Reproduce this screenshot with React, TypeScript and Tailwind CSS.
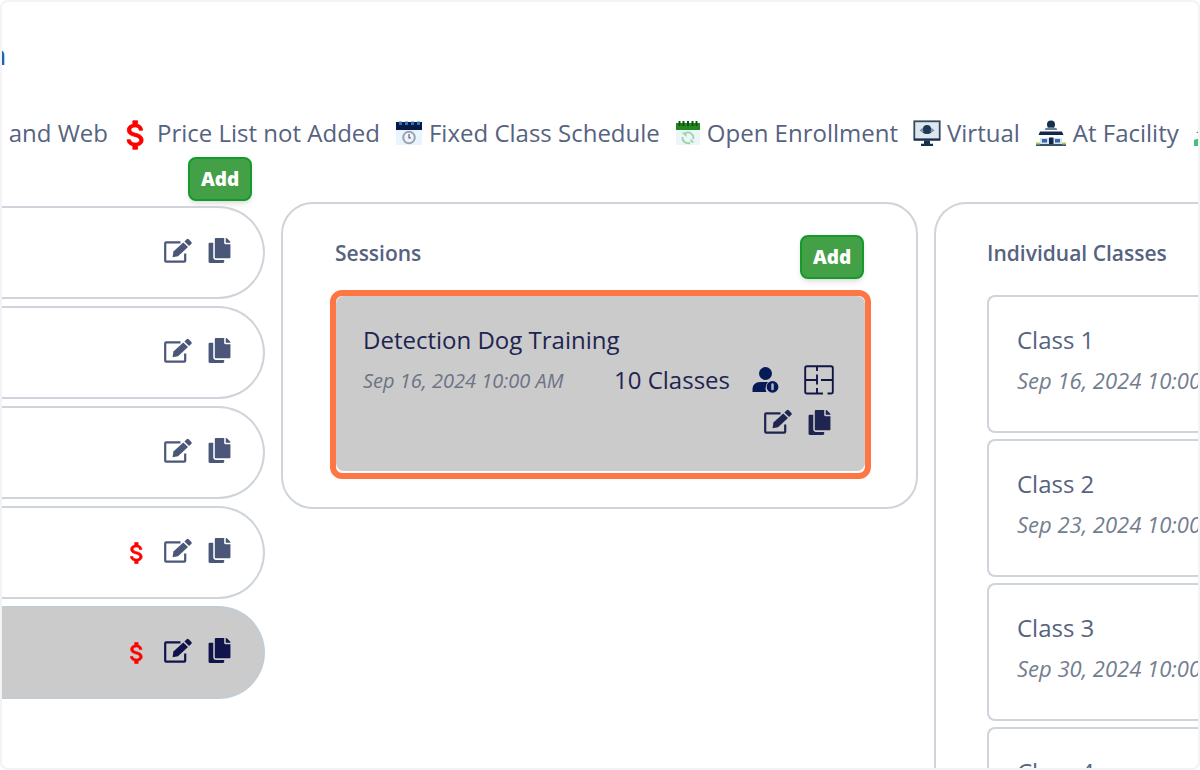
import type { ReactNode } from "react";
import { FaCopy } from "react-icons/fa";

function EditIcon() {
  return (
    <svg width="30" height="26" viewBox="0 0 30 26" fill="none" aria-hidden="true">
      <path
        d="M17.500 4.300H3.200Q2.200 4.300 2.200 5.300V22.700Q2.200 23.700 3.200 23.700H21.200Q22.200 23.700 22.200 22.700V15.500"
        stroke="currentColor"
        strokeWidth="2.200"
      />
      <path d="M9.600 19.200L10.400 13.600L20.300 4.500L25 9.100L15 18.300Z" fill="currentColor" />
      <path d="M21.400 3.500L23.700 1.200Q24.700 .3 25.700 1.200L28.400 3.900Q29.300 4.800 28.400 5.800L26.100 8.100Z" fill="currentColor" />
    </svg>
  );
}

function FixedScheduleIcon() {
  return (
    <svg width="28" height="26" viewBox="0 0 28 26" aria-hidden="true">
      <rect x="1" y="8" width="26" height="17" fill="#e9f5fe" />
      <rect x="1" y="2" width="26" height="8" fill="#061a45" />
      <path d="M4 1.500h3v3.500H4zM10 1.500h3v3.500h-3zM16 1.500h3v3.500h-3zM22 1.500h3v3.500h-3z" fill="#2f73c0" />
      <circle cx="14" cy="17.500" r="5.800" fill="#eef4f8" stroke="#9aa4b0" strokeWidth="2" />
      <path d="M14 14V17.800H16" stroke="#66717f" strokeWidth="1.300" fill="none" />
    </svg>
  );
}

function OpenEnrollmentIcon() {
  return (
    <svg width="26" height="26" viewBox="0 0 26 26" aria-hidden="true">
      <rect x="1" y="8" width="24" height="17" fill="#e9f7fb" />
      <rect x="1" y="3" width="24" height="7" fill="#23891c" />
      <path d="M4.500 1v5M8.500 1v5M13 1v5M17.500 1v5M21.500 1v5" stroke="#174c1b" strokeWidth="2" />
      <path d="M7.500 17A5.500 5.500 0 0 0 15 22.800M18.300 19A5.500 5.500 0 0 0 10.500 13" stroke="#9fd3a2" strokeWidth="1.800" fill="none" />
      <path d="M6.500 12.500h5v4.500zM19.500 22.500h-4v-4z" fill="#9fd3a2" />
    </svg>
  );
}

function VirtualIcon() {
  return (
    <svg width="28" height="26" viewBox="0 0 28 26" aria-hidden="true">
      <rect x="1.300" y="1.300" width="25.400" height="18.400" fill="#dde7ef" stroke="#35495f" strokeWidth="1.800" />
      <path d="M1 18.600h26v2H1z" fill="#18304f" />
      <path d="M11 20.500h6v3.300h3V26H8v-2.200h3z" fill="#18304f" />
      <path d="M6.500 10.500Q14 3 21.500 10.500Q14 17 6.500 10.500Z" fill="#7e92a6" />
      <circle cx="14" cy="9" r="4" fill="#1e3956" />
      <path d="M9.500 12.500Q14 8.500 18.500 12.500Q14 15.500 9.500 12.500Z" fill="#1e3956" />
    </svg>
  );
}

function FacilityIcon() {
  return (
    <svg width="32" height="28" viewBox="0 0 32 28" aria-hidden="true">
      <circle cx="16" cy="5.500" r="4" fill="#18304f" />
      <path d="M10 9.500Q16 6.500 22 9.500V11H10Z" fill="#6c8298" />
      <path d="M5 12.500h22l1.500 3.500h-25z" fill="#10294a" />
      <rect x="5" y="19" width="22" height="6" fill="#d5e2ee" />
      <path d="M7 20h5v3.500H7zM20 20h5v3.500h-5z" fill="#2e69b2" />
      <path d="M14 18.500h4.500V25H14z" fill="#10294a" />
      <path d="M1 25h30v2H1z" fill="#3a5266" />
      <path d="M1 23.500h4v2H1zM27 23.500h4v2h-4z" fill="#9bd05b" />
    </svg>
  );
}

function OffSiteIcon() {
  return (
    <svg width="28" height="28" viewBox="0 0 28 28" aria-hidden="true">
      <path d="M2 14L10 7L18 14Z" fill="#74828f" />
      <path d="M0 21Q6 18 12 21V27H0Z" fill="#45c07a" />
    </svg>
  );
}

function InstructorIcon() {
  return (
    <svg width="28" height="28" viewBox="0 0 28 28" aria-hidden="true">
      <circle cx="13.500" cy="7.500" r="6.500" fill="#061b55" />
      <path d="M0.500 26V22.500Q1 16.500 8 16H16Q12 21 14.500 26Z" fill="#061b55" />
      <circle cx="20.500" cy="20.800" r="5.900" fill="#061b55" />
      <rect x="19.200" y="17.300" width="2.600" height="7" rx="1.300" fill="#aab0bf" />
    </svg>
  );
}

function FloorPlanIcon() {
  return (
    <svg width="30" height="30" viewBox="0 0 30 30" fill="none" stroke="#111645" strokeWidth="1.900" aria-hidden="true">
      <path d="M19 28.500H3Q1.200 28.500 1.200 26.700V3Q1.200 1.200 3 1.200H27Q28.800 1.200 28.800 3V26.700Q28.800 28.500 27 28.500H23.500" />
      <path d="M13 1V6M13 9.500V19.500M13 23V28.500M1 15H13M17 15H29" />
    </svg>
  );
}

function PriceMissingIcon({ size }: { size: number }) {
  return (
    <svg width={size} height={size} viewBox="0 0 24 24" aria-hidden="true">
      <path
        d="M11.8 10.900c-2.270-.59-3-1.200-3-2.150 0-1.090 1.010-1.850 2.700-1.850 1.780 0 2.440.85 2.500 2.100h2.210c-.07-1.720-1.120-3.300-3.210-3.810V3h-3v2.160c-1.940.42-3.500 1.680-3.500 3.610 0 2.310 1.910 3.460 4.700 4.130 2.500.6 3 1.480 3 2.410 0 .69-.49 1.790-2.700 1.790-2.060 0-2.870-.92-2.980-2.100h-2.200c.12 2.190 1.760 3.420 3.680 3.830V21h3v-2.150c1.950-.37 3.500-1.500 3.500-3.550 0-2.840-2.430-3.810-4.700-4.400z"
        fill="#ff0000"
        stroke="#ff0000"
        strokeWidth="0.5"
      />
    </svg>
  );
}

function AddButton() {
  return (
    <button
      type="button"
      className="h-11 w-16 rounded-lg border-2 border-[#139a2b] bg-[#43a047] text-[19px] font-extrabold text-white shadow-md"
    >
      Add
    </button>
  );
}

function LegendItem({ icon, label }: { icon: ReactNode; label: string }) {
  return (
    <li className="flex shrink-0 items-center gap-1.5">
      {icon}
      <span>{label}</span>
    </li>
  );
}

function RowActions() {
  return (
    <div className="flex items-center gap-3.5 pb-1">
      <button type="button" aria-label="Edit">
        <EditIcon />
      </button>
      <button type="button" aria-label="Copy">
        <FaCopy size={25} />
      </button>
    </div>
  );
}

const programs = [
  { id: 1, unpriced: false, selected: false },
  { id: 2, unpriced: false, selected: false },
  { id: 3, unpriced: false, selected: false },
  { id: 4, unpriced: true, selected: false },
  { id: 5, unpriced: true, selected: true },
];

const classes = [
  { name: "Class 1", date: "Sep 16, 2024 10:00 AM" },
  { name: "Class 2", date: "Sep 23, 2024 10:00 AM" },
  { name: "Class 3", date: "Sep 30, 2024 10:00 AM" },
  { name: "Class 4", date: "Oct 7, 2024 10:00 AM" },
];

export default function App() {
  return (
    <div className="flex h-screen flex-col overflow-hidden rounded-lg border-2 border-[#f2f2f7] bg-white font-['Open_Sans',sans-serif] whitespace-nowrap text-[#56637f]">
      <header className="flex h-[69px] w-1 shrink-0 items-end justify-end overflow-hidden">
        <h1 className="text-[26px] leading-8 font-bold text-[#2a5f9e]">n</h1>
      </header>

      <ul className="mt-[38px] flex h-12 shrink-0 items-center gap-[15px] overflow-hidden text-2xl leading-12">
        <li className="flex w-[106px] shrink-0 justify-end overflow-hidden">
          <span>App and Web</span>
        </li>
        <LegendItem
          icon={
            <span className="-mr-1 -ml-1.5 pt-1">
              <PriceMissingIcon size={38} />
            </span>
          }
          label="Price List not Added"
        />
        <LegendItem icon={<FixedScheduleIcon />} label="Fixed Class Schedule" />
        <LegendItem icon={<OpenEnrollmentIcon />} label="Open Enrollment" />
        <LegendItem icon={<VirtualIcon />} label="Virtual" />
        <LegendItem icon={<FacilityIcon />} label="At Facility" />
        <LegendItem icon={<OffSiteIcon />} label="Off Site" />
      </ul>

      <main className="grid min-h-0 flex-1 grid-cols-[263fr_637fr_264fr] items-start gap-4">
        <section className="flex min-w-0 flex-col gap-[5px]">
          <div className="flex justify-end pr-[13px]">
            <AddButton />
          </div>
          <ul className="flex flex-col gap-[7px]">
            {programs.map((program) => (
              <li
                key={program.id}
                className={
                  program.selected
                    ? "flex h-[93px] items-center justify-end gap-3 rounded-r-full border-2 border-l-0 border-[#c3ccd3] bg-[#cbcbcb] pr-[31px] text-[#10144a]"
                    : "flex h-[93px] items-center justify-end gap-3 rounded-r-full border-2 border-l-0 border-[#ced4da] pr-[31px] text-[#4b5778]"
                }
              >
                {program.unpriced && <PriceMissingIcon size={28} />}
                <RowActions />
              </li>
            ))}
          </ul>
        </section>

        <section className="mt-[45px] min-w-0 rounded-[32px] border-2 border-[#ced4da] pt-[31px] pr-[45px] pb-7 pl-[47px]">
          <div className="flex items-start justify-between pr-[7px] pl-[5px]">
            <h2 className="text-[21px] leading-9 font-semibold">Sessions</h2>
            <AddButton />
          </div>
          <div className="mt-[11px] rounded-xl border-6 border-[#ff7645] pb-0.5">
            <article className="rounded-lg bg-[#cbcbcb] pt-6 pr-[31px] pb-[27px] pl-[27px] text-[#1f2450]">
              <h3 className="text-2xl leading-10">Detection Dog Training</h3>
              <div className="flex h-10 items-center">
                <p className="pt-0.5 text-xl text-[#6d7486] italic">Sep 16, 2024 10:00 AM</p>
                <p className="ml-auto text-2xl">10 Classes</p>
                <button type="button" aria-label="Instructor" className="ml-[22px]">
                  <InstructorIcon />
                </button>
                <button type="button" aria-label="Floor plan" className="ml-6">
                  <FloorPlanIcon />
                </button>
              </div>
              <div className="flex h-11 items-center justify-end pt-1 pr-0.5">
                <RowActions />
              </div>
            </article>
          </div>
        </section>

        <section className="mt-[45px] min-w-0 overflow-hidden rounded-tl-[32px] border-2 border-r-0 border-b-0 border-[#ced4da] pt-[31px] pl-[51px]">
          <h2 className="text-[21px] leading-9 font-semibold">Individual Classes</h2>
          <ul className="mt-6 flex flex-col gap-1.5">
            {classes.map((item) => (
              <li
                key={item.name}
                className="h-[138px] overflow-hidden rounded-l-lg border-2 border-r-0 border-[#ced4da] pt-[23px] pl-7"
              >
                <h3 className="text-2xl leading-10">{item.name}</h3>
                <p className="text-[22px] leading-10 text-[#747d90] italic">{item.date}</p>
              </li>
            ))}
          </ul>
        </section>
      </main>
    </div>
  );
}
